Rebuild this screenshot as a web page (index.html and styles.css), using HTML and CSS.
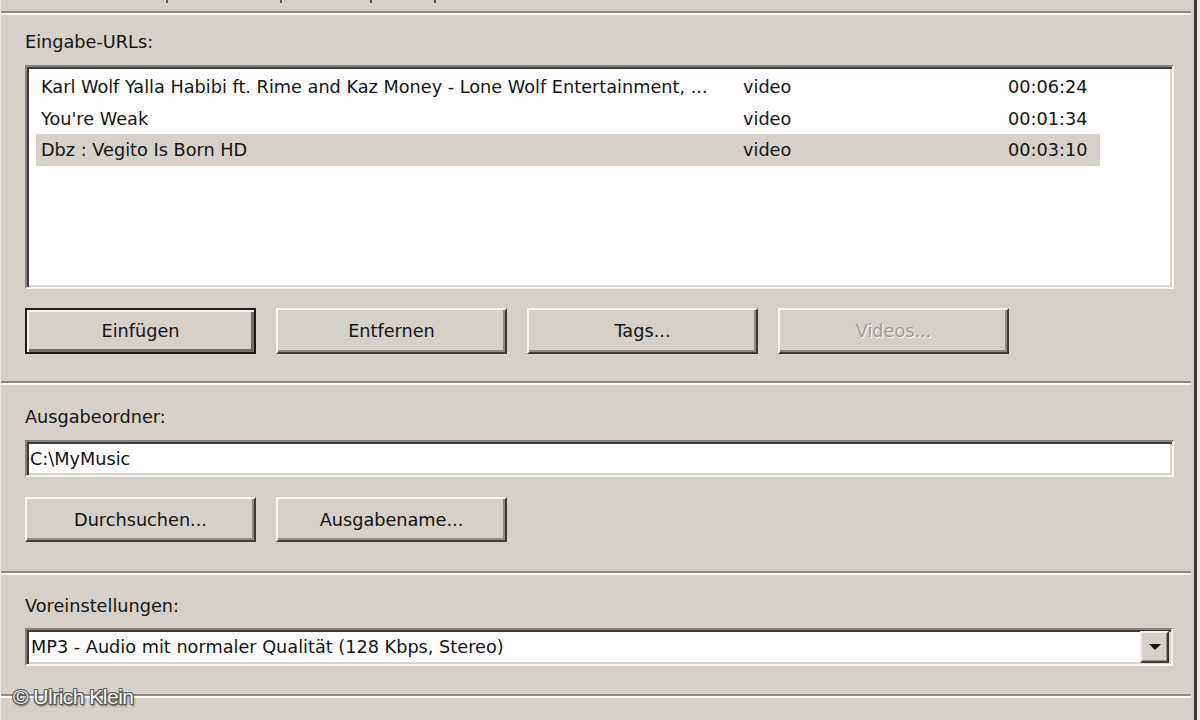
FILE: index.html
```html
<!DOCTYPE html>
<html>
<head>
  <meta charset="utf-8">
  <title>Eingabe-URLs</title>
  <link rel="stylesheet" href="styles.css">
</head>
<body>
  <div class="dialog">
    <div class="topstrip">
      <span class="tick" style="margin-left:165px"></span>
      <span class="tick" style="margin-left:112px"></span>
      <span class="tick" style="margin-left:88px"></span>
      <span class="tick" style="margin-left:62px"></span>
    </div>
    <div class="sep"></div>

    <div class="section s1">
      <div class="label">Eingabe-URLs:</div>
      <div class="listbox">
        <div class="row"><span>Karl Wolf Yalla Habibi ft. Rime and Kaz Money - Lone Wolf Entertainment, ...</span><span>video</span><span>00:06:24</span></div>
        <div class="row"><span>You're Weak</span><span>video</span><span>00:01:34</span></div>
        <div class="row selected"><span>Dbz : Vegito Is Born HD</span><span>video</span><span>00:03:10</span></div>
      </div>
      <div class="buttons">
        <div class="btn default">Einfügen</div>
        <div class="btn">Entfernen</div>
        <div class="btn">Tags...</div>
        <div class="btn disabled">Videos...</div>
      </div>
    </div>
    <div class="sep"></div>

    <div class="section s2">
      <div class="label">Ausgabeordner:</div>
      <div class="field">C:\MyMusic</div>
      <div class="buttons">
        <div class="btn">Durchsuchen...</div>
        <div class="btn">Ausgabename...</div>
      </div>
    </div>
    <div class="sep"></div>

    <div class="section s3">
      <div class="label">Voreinstellungen:</div>
      <div class="combo">
        <span class="combo-text">MP3 - Audio mit normaler Qualität (128 Kbps, Stereo)</span>
        <span class="combo-btn"><span class="arrow"></span></span>
      </div>
    </div>
    <div class="sep"></div>

    <div class="watermark">© Ulrich Klein</div>
  </div>
</body>
</html>
```

FILE: styles.css
```css
body {
  margin: 0;
  background: #ecebe8;
  font-family: "DejaVu Sans", Verdana, sans-serif;
  font-size: 17.7px;
  color: #141414;
}

.dialog {
  position: relative;
  width: 1197px;
  height: 720px;
  box-sizing: border-box;
  background: #d5d0ca;
  border-right: 3px solid #3e3c3a;
  border-left: 1px solid #ebe8e4;
  overflow: hidden;
}

.topstrip {
  height: 11px;
  display: flex;
  align-items: flex-start;
}
.tick {
  width: 2px;
  height: 3px;
  background: #55524e;
}

.sep {
  height: 0;
  margin-right: 3px;
  border-top: 2px solid #8d8983;
  border-bottom: 2px solid #faf9f6;
}

.section {
  padding: 0 20px 0 24px;
}
.s1 { padding-top: 17px; padding-bottom: 27px; }
.s2 { padding-top: 22px; padding-bottom: 29px; }
.s3 { padding-top: 21px; padding-bottom: 28px; }

.label {
  height: 20px;
  line-height: 20px;
}

/* sunken 3d box */
.listbox, .field, .combo {
  background: #fff;
  box-sizing: border-box;
  border-top: 2px solid #85817c;
  border-left: 2px solid #85817c;
  border-right: 2px solid #f6f5f2;
  border-bottom: 2px solid #f6f5f2;
  box-shadow: inset 2px 2px 0 #3e3c3a, inset -2px -2px 0 #d8d4ce;
}

.listbox {
  margin-top: 13px;
  height: 224px;
  padding: 4px 0 0 9px;
}
.row {
  display: grid;
  grid-template-columns: 702px 265px 97px;
  height: 31.5px;
  line-height: 32px;
  padding-left: 5px;
  width: 1064px;
  box-sizing: border-box;
  white-space: nowrap;
}
.row span { overflow: hidden; }
.row.selected { background: #d6d1cb; }

.buttons {
  display: flex;
  gap: 20px;
}
.s1 .buttons { margin-top: 19px; }
.s2 .buttons { margin-top: 20px; }

.btn {
  width: 231px;
  height: 46px;
  box-sizing: border-box;
  display: flex;
  align-items: center;
  justify-content: center;
  background: #d5d0ca;
  border-top: 2px solid #f8f7f4;
  border-left: 2px solid #f8f7f4;
  border-right: 2px solid #3e3c3a;
  border-bottom: 2px solid #3e3c3a;
  box-shadow: inset -2px -2px 0 #8d8983;
}
.s2 .btn { height: 45px; }
.btn.default {
  border: 2px solid #1e1d1c;
  box-shadow: inset 2px 2px 0 #f8f7f4, inset -3px -3px 0 #6f6b66;
}
.btn.disabled {
  color: #a19d97;
  text-shadow: 1px 1px 0 #fbfaf8;
}

.field {
  margin-top: 13px;
  height: 37px;
  line-height: 34px;
  padding-left: 3px;
}

.combo {
  margin-top: 12px;
  height: 38px;
  width: 1148px;
  display: flex;
  align-items: center;
  justify-content: space-between;
  padding: 0 2px 0 4px;
}
.combo-btn {
  width: 29px;
  height: 32px;
  box-sizing: border-box;
  display: flex;
  align-items: center;
  justify-content: center;
  background: #d5d0ca;
  border-top: 2px solid #f0eeea;
  border-left: 2px solid #f0eeea;
  border-right: 2px solid #3e3c3a;
  border-bottom: 2px solid #3e3c3a;
  box-shadow: inset -1px -1px 0 #8d8983;
}
.arrow {
  width: 0;
  height: 0;
  border-left: 6px solid transparent;
  border-right: 6px solid transparent;
  border-top: 6px solid #111;
}

.watermark {
  position: absolute;
  left: 12px;
  top: 685px;
  font-family: "Liberation Sans", Arial, sans-serif;
  font-size: 21px;
  color: #f4f4f4;
  letter-spacing: -0.5px;
  text-shadow: -1px -1px 0 #5a5a5a, 1px -1px 0 #5a5a5a, -1px 1px 0 #5a5a5a, 1px 1px 0 #5a5a5a, 1px 2px 2px #333;
}
```
